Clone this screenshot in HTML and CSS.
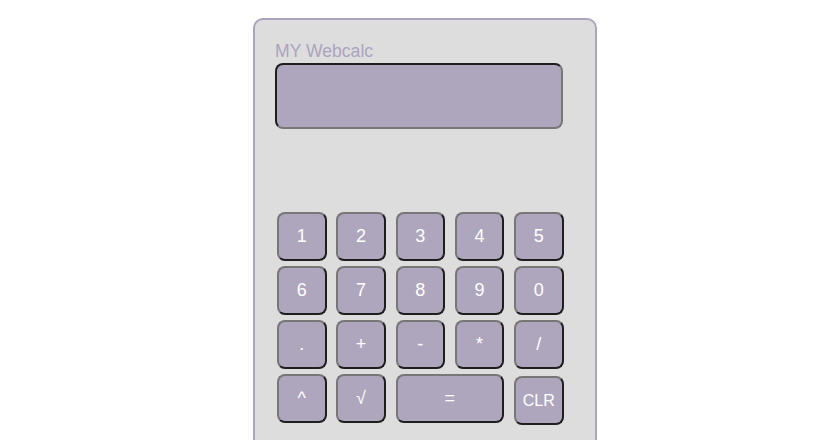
FILE: index.html
```html
<!DOCTYPE html>
<html>
<head>
<meta charset="utf-8">
<link rel="stylesheet" href="styles.css">
</head>
<body>
<div class="calc">
  <div class="title">MY Webcalc</div>
  <div class="display"></div>
  <div class="keys">
    <button class="key">1</button>
    <button class="key">2</button>
    <button class="key">3</button>
    <button class="key">4</button>
    <button class="key">5</button>
    <button class="key">6</button>
    <button class="key">7</button>
    <button class="key">8</button>
    <button class="key">9</button>
    <button class="key">0</button>
    <button class="key">.</button>
    <button class="key">+</button>
    <button class="key">-</button>
    <button class="key">*</button>
    <button class="key">/</button>
    <button class="key">^</button>
    <button class="key">√</button>
    <button class="key key-wide">=</button>
    <button class="key key-clr">CLR</button>
  </div>
</div>
</body>
</html>
```
FILE: styles.css
```css
html, body {
  margin: 0;
  padding: 0;
  background: #ffffff;
}
body {
  font-family: "Liberation Sans", Arial, sans-serif;
  height: 440px;
  overflow: hidden;
}
.calc {
  box-sizing: border-box;
  width: 344px;
  height: 460px;
  margin: 18px 0 0 calc(50% - 167px);
  padding: 21px 32px 0 20px;
  background: #dddddd;
  border: 2px solid #aca4bd;
  border-radius: 10px;
}
.title {
  font-size: 17.6px;
  line-height: 20px;
  color: #aca4bd;
}
.display {
  box-sizing: border-box;
  width: 288px;
  height: 66px;
  margin-top: 2px;
  background: #aea6bd;
  border: 2px solid;
  border-color: #1e1e1e #777777 #777777 #1e1e1e;
  border-radius: 8px;
}
.keys {
  display: grid;
  grid-template-columns: repeat(5, 49.5px);
  grid-auto-rows: 49px;
  column-gap: 9.75px;
  row-gap: 5px;
  margin: 83px 0 0 2px;
}
.key {
  box-sizing: border-box;
  margin: 0;
  padding: 0;
  background: #aea6bd;
  color: #ffffff;
  font-family: "Liberation Sans", Arial, sans-serif;
  font-size: 18px;
  border: 2px solid;
  border-color: #777777 #1e1e1e #1e1e1e #777777;
  border-radius: 8px;
}
.key-wide {
  grid-column: span 2;
}
.key-clr {
  font-size: 16px;
  margin-top: 2px;
  margin-bottom: -2px;
}
```
